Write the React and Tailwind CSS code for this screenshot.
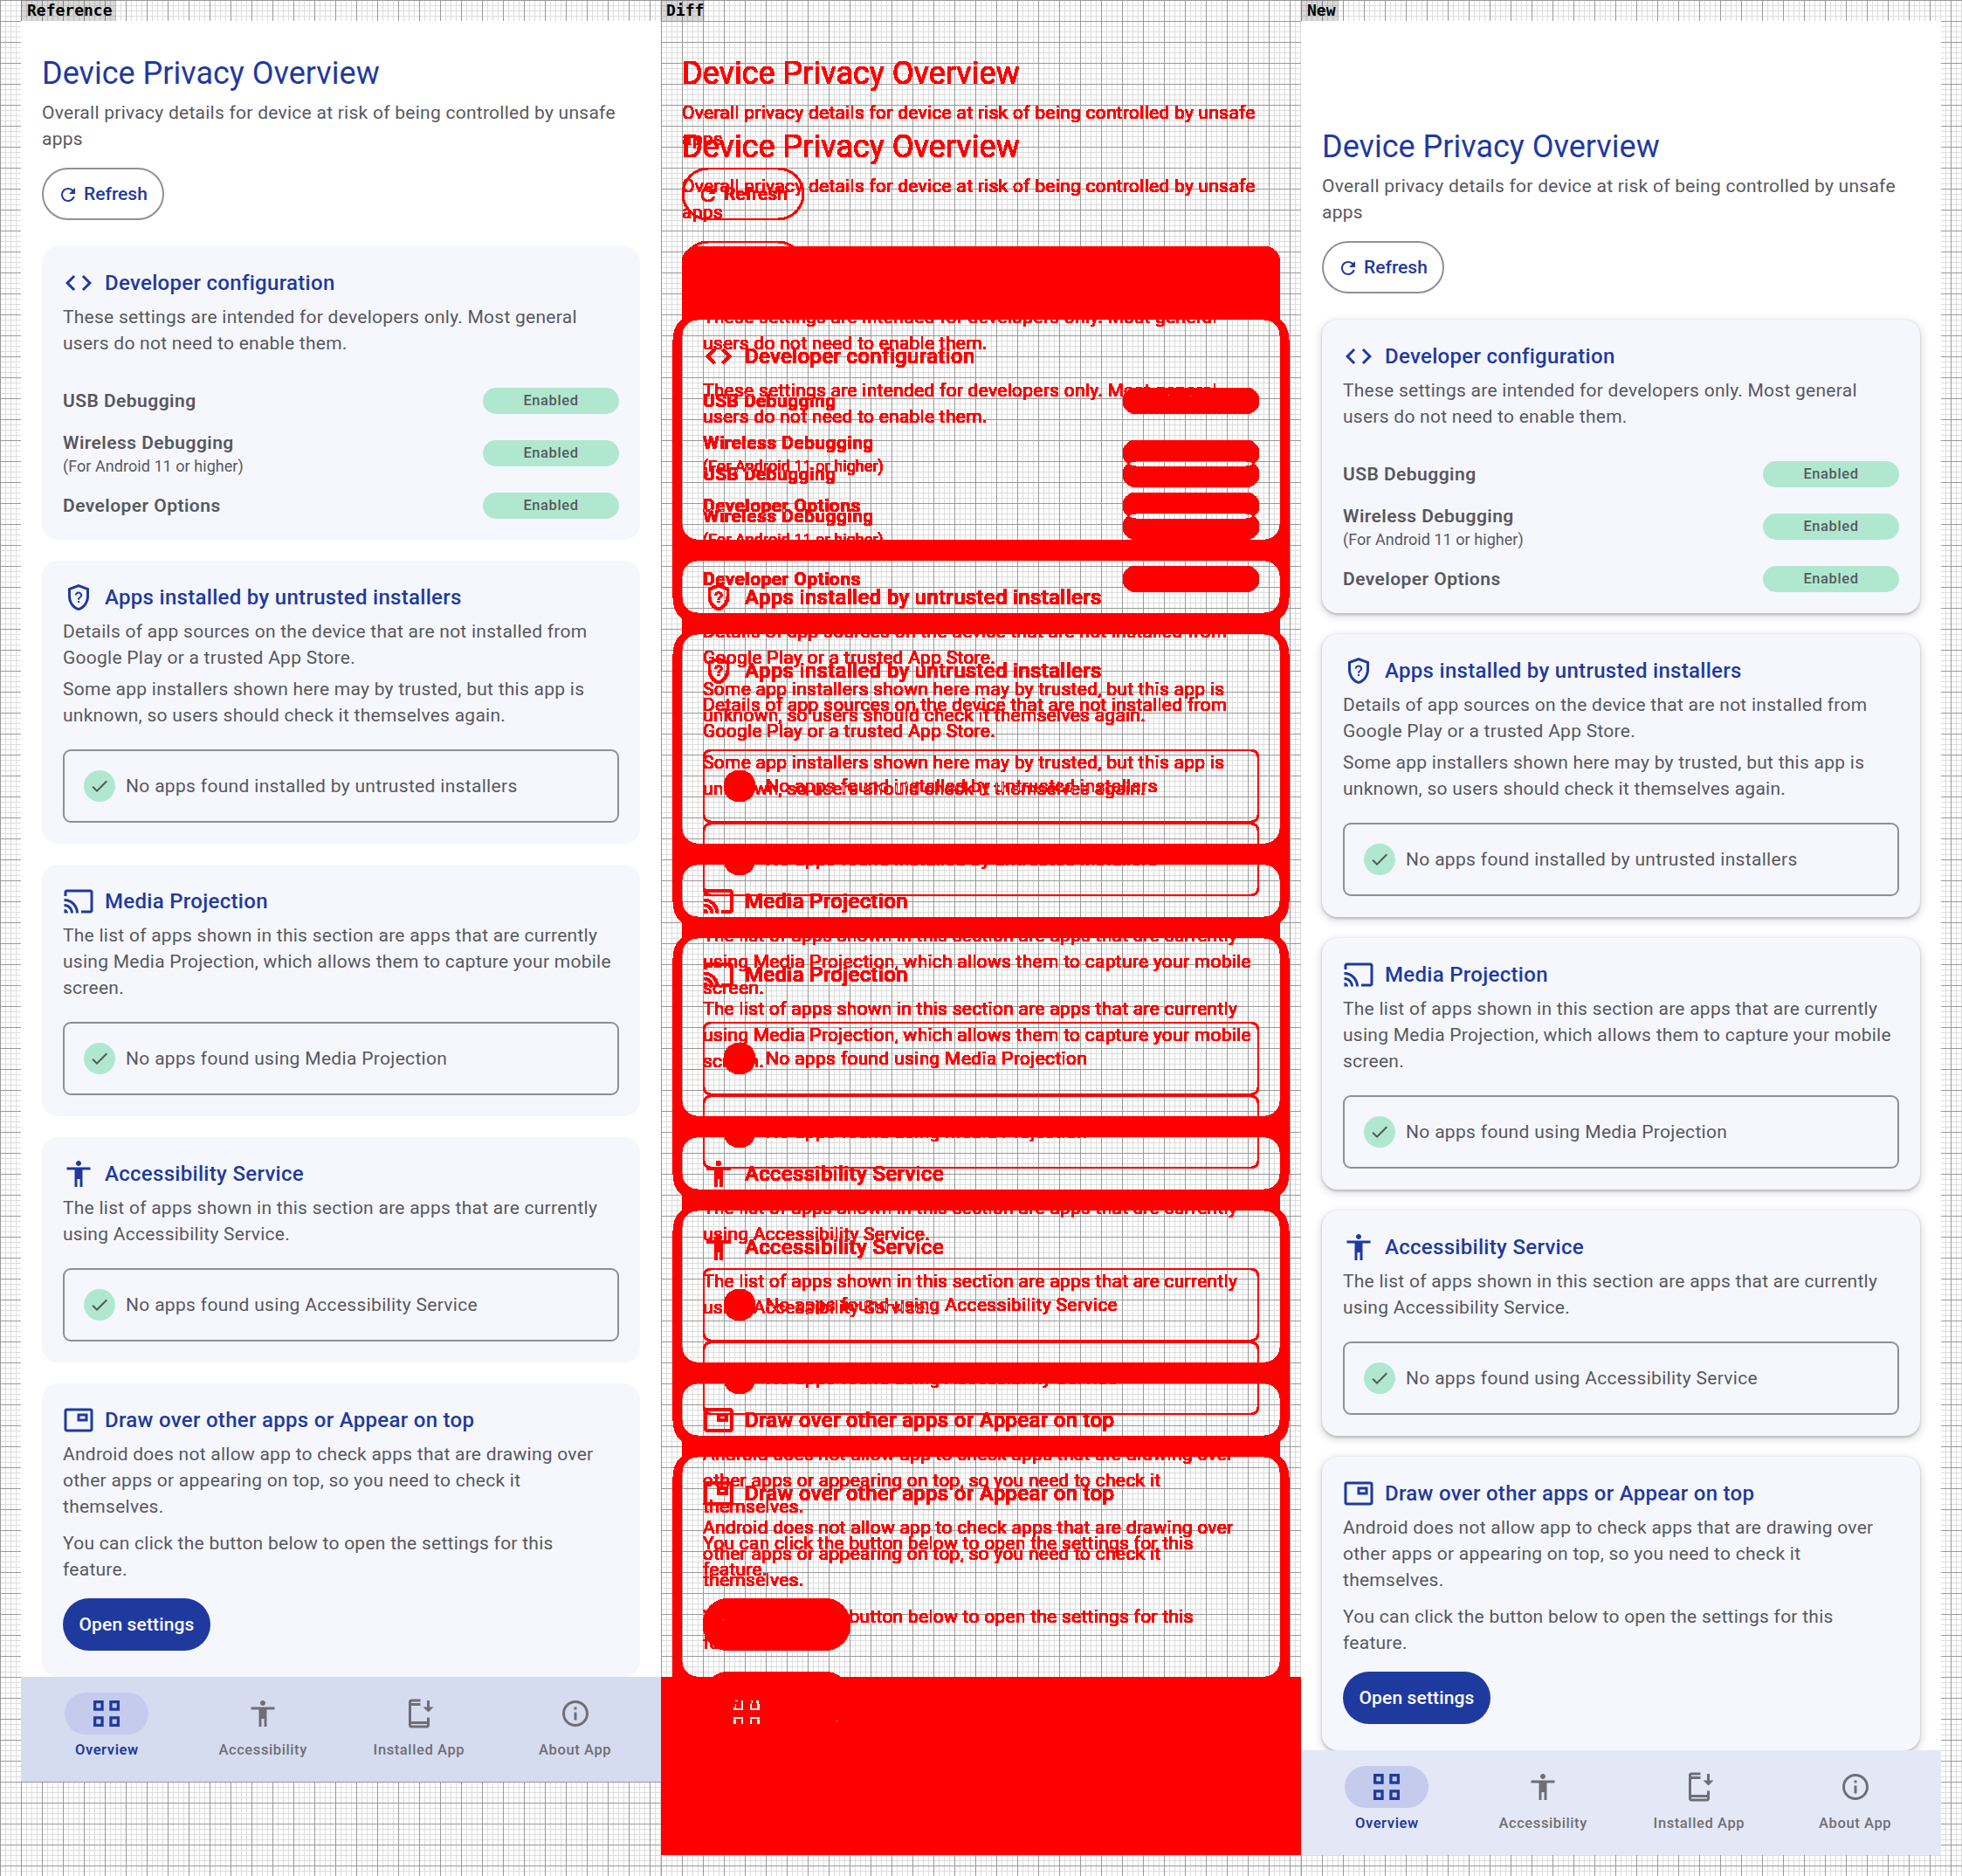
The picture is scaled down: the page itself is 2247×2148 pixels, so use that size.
const P = {
  refresh: "M17.65 6.35C16.2 4.9 14.21 4 12 4c-4.42 0-7.99 3.58-7.99 8s3.57 8 7.99 8c3.73 0 6.84-2.55 7.73-6h-2.08c-.82 2.33-3.04 4-5.65 4-3.31 0-6-2.69-6-6s2.69-6 6-6c1.66 0 3.14.69 4.22 1.78L13 11h7V4l-2.35 2.35z",
  code: "M9.4 16.6L4.8 12l4.6-4.6L8 6l-6 6 6 6 1.4-1.4zm5.2 0l4.6-4.6-4.6-4.6L16 6l6 6-6 6-1.4-1.4z",
  cast: "M21 3H3c-1.1 0-2 .9-2 2v3h2V5h18v14h-7v2h7c1.1 0 2-.9 2-2V5c0-1.1-.9-2-2-2zM1 18v3h3c0-1.66-1.34-3-3-3zm0-4v2c2.76 0 5 2.24 5 5h2c0-3.87-3.13-7-7-7zm0-4v2c4.97 0 9 4.03 9 9h2c0-6.08-4.93-11-11-11z",
  access: "M12 2c1.1 0 2 .9 2 2s-.9 2-2 2-2-.9-2-2 .9-2 2-2zm9 7h-6v13h-2v-6h-2v6H9V9H3V7h18v2z",
  pip: "M19 7h-8v6h8V7zm-2 4h-4V9h4v2zm4-8H3c-1.1 0-2 .88-2 1.98V19c0 1.1.9 2 2 2h18c1.1 0 2-.9 2-2V4.98C23 3.88 22.1 3 21 3zm0 16.02H3V4.97h18v14.05z",
  check: "M9 16.17L4.83 12l-1.41 1.41L9 19 21 7l-1.41-1.41z",
  grid: "M2 2h7.8v7.8H2zM4.2 4.2v3.4h3.4V4.2zM14.2 2H22v7.8h-7.8zM16.4 4.2v3.4h3.4V4.2zM2 14.2h7.8V22H2zM4.2 16.4v3.4h3.4v-3.4zM14.2 14.2H22V22h-7.8zM16.4 16.4v3.4h3.4v-3.4z",
  install: "M18 15v3H6V6h7V4H6V3h7V1.01L6 1C4.9 1 4 1.9 4 3v18c0 1.1.9 2 2 2h12c1.1 0 2-.9 2-2v-6h-2zm0 6H6v-1h12v1zM20 7V2h-2v5h-3l4 4 4-4h-3z",
  info: "M11 7h2v2h-2zm0 4h2v6h-2zm1-9C6.48 2 2 6.48 2 12s4.48 10 10 10 10-4.48 10-10S17.52 2 12 2zm0 18c-4.41 0-8-3.59-8-8s3.59-8 8-8 8 3.59 8 8-3.59 8-8 8z",
  shield: "M12 2L4 5v6.09c0 5.05 3.41 9.76 8 10.91 4.59-1.15 8-5.86 8-10.91V5l-8-3zm6 9.09c0 4-2.55 7.7-6 8.83-3.45-1.13-6-4.82-6-8.83v-4.7l6-2.25 6 2.25v4.7z",
  q: "M11 16h2v2h-2zM12 6c-2.21 0-4 1.79-4 4h2c0-1.1.9-2 2-2s2 .9 2 2c0 2-3 1.75-3 5h2c0-2.25 3-2.5 3-5 0-2.21-1.79-4-4-4z",
};

function Icon({ d, className, children }) {
  return (
    <svg viewBox="0 0 24 24" fill="currentColor" className={className}>
      {d && <path d={d} />}
      {children}
    </svg>
  );
}

function ShieldQ({ className }) {
  return (
    <Icon d={P.shield} className={className}>
      <g transform="translate(12 11.8) scale(.7) translate(-12 -12)">
        <path d={P.q} />
      </g>
    </Icon>
  );
}

function Body({ children, className = "" }) {
  return <p className={"text-[21px] leading-[30px] tracking-[.26px] text-[#58585e] " + className}>{children}</p>;
}

function Card({ icon, title, children, shadow, className = "" }) {
  return (
    <section className={"rounded-[18px] bg-[#f5f7fd] px-[24px] pt-[24px] " + (shadow ? "shadow-[0_1.5px_3px_rgba(0,0,0,0.2),0_3px_9px_3px_rgba(0,0,0,0.1)] " : "") + className}>
      <div className="flex h-[36px] items-center gap-[12px]">
        <span className="size-[36px] text-[#1f3a9f]">{icon}</span>
        <h2 className="text-[24px] leading-[36px] font-medium tracking-[.3px] text-[#1f3a9f]">{title}</h2>
      </div>
      {children}
    </section>
  );
}

function Empty({ children }) {
  return (
    <div className="mt-[24px] flex h-[84px] items-center gap-[12px] rounded-[9px] border-[2px] border-[#8f8f96] pl-[22px]">
      <span className="flex size-[36px] items-center justify-center rounded-full bg-[#b0e8cf] text-[#55555b]">
        <Icon d={P.check} className="size-[24px]" />
      </span>
      <span className="text-[21px] leading-[30px] tracking-[.32px] text-[#58585e]">{children}</span>
    </div>
  );
}

function Row({ label, sub }) {
  return (
    <div className="flex items-center justify-between">
      <div>
        <div className="text-[21px] leading-[30px] font-semibold tracking-[.45px] text-[#58585e]">{label}</div>
        {sub && <div className="text-[18px] leading-[24px] tracking-[.05px] text-[#58585e]">{sub}</div>}
      </div>
      <span className="flex h-[30px] w-[156px] items-center justify-center rounded-full bg-[#b0e8cf] text-[16.5px] leading-[24px] font-medium tracking-[.6px] text-[#58585e]">
        Enabled
      </span>
    </div>
  );
}

function NavItem({ icon, label, active }) {
  return (
    <div className="flex flex-1 flex-col items-center">
      <span className={"flex h-[48px] w-[96px] items-center justify-center rounded-full " + (active ? "bg-[#c4cbec] text-[#1f3a9f]" : "text-[#6f6e74]")}>
        {icon}
      </span>
      <span className={"mt-[6px] text-[16.5px] leading-[24px] font-medium tracking-[.6px] " + (active ? "font-semibold text-[#1f3a9f]" : "text-[#6f6e74]")}>
        {label}
      </span>
    </div>
  );
}

function Screen({ fresh }) {
  const ic = "size-[36px]";
  return (
    <div className="flex h-full w-[733px] flex-col overflow-hidden bg-white [font-family:Roboto,sans-serif]">
      <div className={"min-h-0 flex-1 overflow-hidden px-[24px] " + (fresh ? "pt-[120px]" : "pt-[36px]")}>
        <h1 className="text-[36px] leading-[48px] font-normal text-[#1f3a9f]">Device Privacy Overview</h1>
        <Body className="mt-[6px]">Overall privacy details for device at risk of being controlled by unsafe apps</Body>
        <button className="mt-[18px] flex h-[60px] w-[140px] items-center gap-[6px] rounded-full border-[2px] border-[#8f8f96] pt-px pl-[16px] text-[21px] font-medium text-[#1f3a9f]">
          <Icon d={P.refresh} className="size-[24px]" />
          Refresh
        </button>
        <div className="mt-[30px] flex flex-col gap-[24px]">
          <Card shadow={fresh} icon={<Icon d={P.code} className={ic} />} title="Developer configuration" className="pb-[24px]">
            <Body className="mt-[6px]">These settings are intended for developers only. Most general users do not need to enable them.</Body>
            <div className="mt-[36px] flex flex-col gap-[18px]">
              <Row label="USB Debugging" />
              <Row label="Wireless Debugging" sub="(For Android 11 or higher)" />
              <Row label="Developer Options" />
            </div>
          </Card>
          <Card shadow={fresh} icon={<ShieldQ className={ic} />} title="Apps installed by untrusted installers" className="pb-[24px]">
            <Body className="mt-[6px]">Details of app sources on the device that are not installed from Google Play or a trusted App Store.</Body>
            <Body className="mt-[6px]">Some app installers shown here may by trusted, but this app is unknown, so users should check it themselves again.</Body>
            <Empty>No apps found installed by untrusted installers</Empty>
          </Card>
          <Card shadow={fresh} icon={<Icon d={P.cast} className={ic} />} title="Media Projection" className="pb-[24px]">
            <Body className="mt-[6px]">The list of apps shown in this section are apps that are currently using Media Projection, which allows them to capture your mobile screen.</Body>
            <Empty>No apps found using Media Projection</Empty>
          </Card>
          <Card shadow={fresh} icon={<Icon d={P.access} className={ic} />} title="Accessibility Service" className="pb-[24px]">
            <Body className="mt-[6px]">The list of apps shown in this section are apps that are currently using Accessibility Service.</Body>
            <Empty>No apps found using Accessibility Service</Empty>
          </Card>
          <Card shadow={fresh} icon={<Icon d={P.pip} className={ic} />} title="Draw over other apps or Appear on top" className="pb-[30px]">
            <Body className="mt-[6px]">Android does not allow app to check apps that are drawing over other apps or appearing on top, so you need to check it themselves.</Body>
            <Body className="mt-[12px]">You can click the button below to open the settings for this feature.</Body>
            <button className="mt-[18px] flex h-[60px] w-[169px] items-center justify-center rounded-full bg-[#1f3a9f] pt-px text-[21px] font-medium tracking-[.15px] text-white">
              Open settings
            </button>
          </Card>
        </div>
      </div>
      <nav className={"flex h-[120px] shrink-0 px-[9px] pt-[18px] " + (fresh ? "bg-[#e4e8f6]" : "bg-[#d6dcef]")}>
        <NavItem active icon={<Icon d={P.grid} className={ic} />} label="Overview" />
        <NavItem icon={<Icon d={P.access} className={ic} />} label="Accessibility" />
        <NavItem icon={<Icon d={P.install} className={ic} />} label="Installed App" />
        <NavItem icon={<Icon d={P.info} className={ic} />} label="About App" />
      </nav>
    </div>
  );
}

const gridBg =
  "bg-white [background-image:linear-gradient(#999_1px,transparent_1px),linear-gradient(90deg,#999_1px,transparent_1px),linear-gradient(#ddd_1px,transparent_1px),linear-gradient(90deg,#ddd_1px,transparent_1px)] [background-size:24px_24px,24px_24px,6px_6px,6px_6px]";

function Tab({ children, className }) {
  return (
    <div className={"h-[24px] bg-[rgba(0,0,0,0.15)] text-[18px] leading-[24px] font-bold text-black [font-family:'DejaVu_Sans_Mono',monospace] " + className}>
      {children}
    </div>
  );
}

export default function App() {
  return (
    <div className="flex h-[2148px] w-[2247px]">
      <svg className="absolute size-0" aria-hidden="true">
        <filter id="diff" colorInterpolationFilters="sRGB" x="0" y="0" width="1" height="1">
          <feColorMatrix type="matrix" values="0 0 0 0 1  0 0 0 0 0  0 0 0 0 0  255 255 255 0 -0.5" />
        </filter>
      </svg>

      <div className={"h-full w-[757px] pl-[24px] " + gridBg}>
        <Tab className="w-[109px] pl-[7px]">Reference</Tab>
        <div className="h-[2016px]">
          <Screen />
        </div>
      </div>

      <div className={"h-full w-[733px] " + gridBg}>
        <Tab className="w-[50px] overflow-hidden pl-[6px]">Diff</Tab>
        <div className="relative isolate h-[2100px] w-[733px] bg-black [filter:url(#diff)]">
          <div className="h-[2016px]">
            <Screen />
          </div>
          <div className="absolute inset-0 mix-blend-difference">
            <Screen fresh />
          </div>
        </div>
      </div>

      <div className={"h-full w-[757px] pr-[24px] " + gridBg}>
        <Tab className="w-[43px] overflow-hidden pl-[7px]">New</Tab>
        <div className="h-[2100px]">
          <Screen fresh />
        </div>
      </div>
    </div>
  );
}
